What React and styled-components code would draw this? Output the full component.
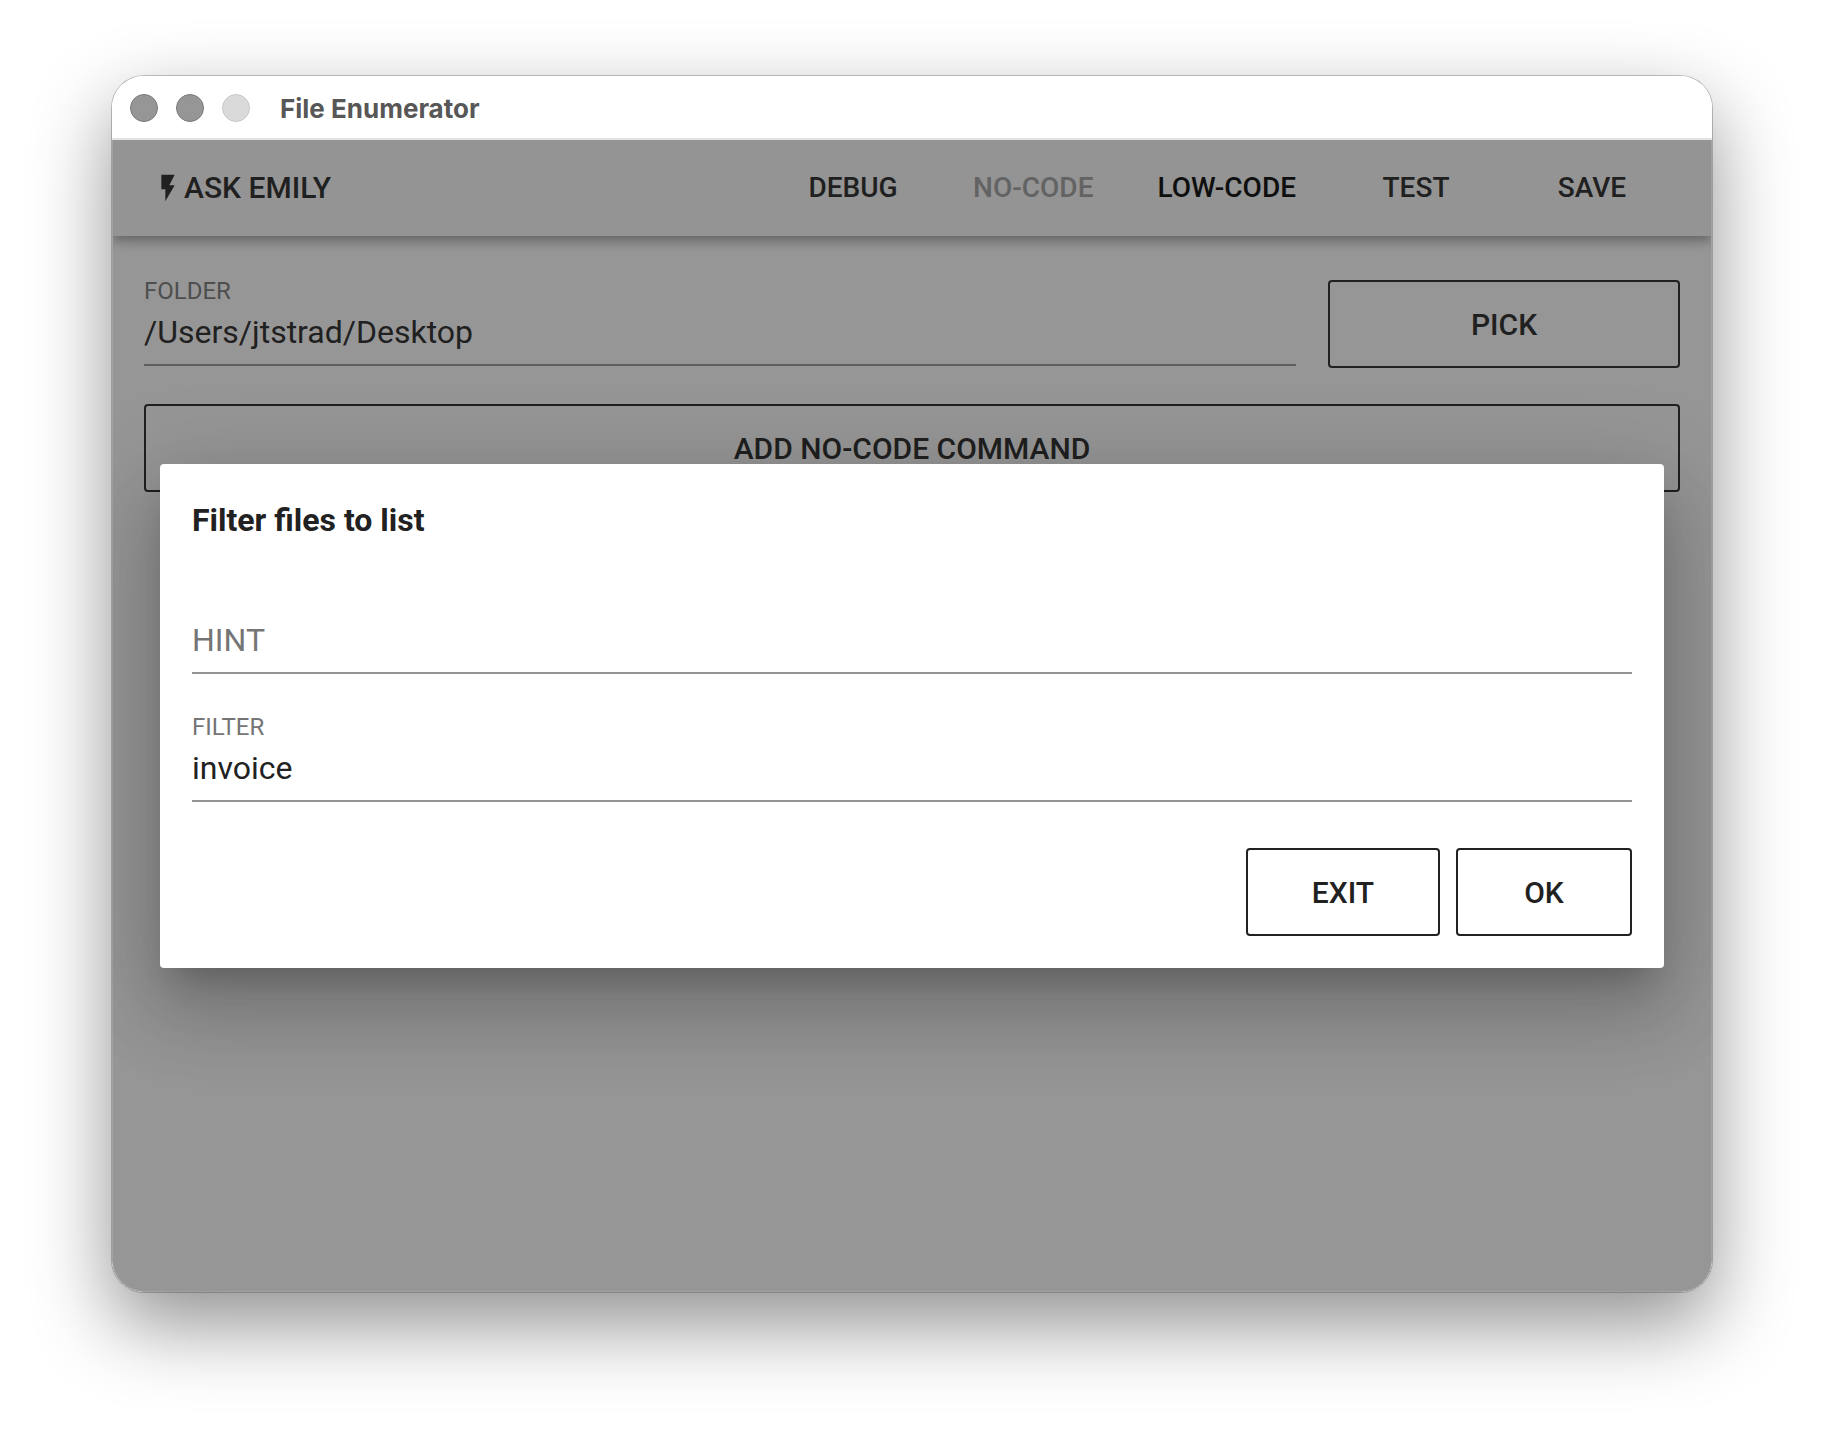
import React, { useState } from "react";
import styled, { createGlobalStyle } from "styled-components";
import { MdFlashOn } from "react-icons/md";

const GlobalStyle = createGlobalStyle`
    * {
        box-sizing: border-box;
    }
    body {
        margin: 0;
        background: #ffffff;
        color: #212121;
        font-family: Roboto, sans-serif;
    }
    button, input {
        font-family: inherit;
        color: inherit;
    }
`;

const actions = [
    { label: "Debug" },
    { label: "No-Code", disabled: true },
    { label: "Low-Code", active: true },
    { label: "Test" },
    { label: "Save" },
];

function TextField({ id, label, value, onChange }) {
    return (
        <FieldStyled>
            {/* the label only floats above the line once there is a value */}
            <FieldLabel htmlFor={id} $floating={value !== ""}>{label}</FieldLabel>
            <FieldInput id={id} type="text" value={value} onChange={(e) => onChange(e.target.value)} />
        </FieldStyled>
    );
}

function App() {
    const [folder, setFolder] = useState("/Users/jtstrad/Desktop");
    const [hint, setHint] = useState("");
    const [filter, setFilter] = useState("invoice");

    return (
        <Page>
            <GlobalStyle />
            <Window>
                <TitleBar>
                    <Lights>
                        <Light />
                        <Light />
                        <Light $dim />
                    </Lights>
                    <WindowTitle>File Enumerator</WindowTitle>
                </TitleBar>
                <Content>
                    <Toolbar>
                        <Brand href="#">
                            <MdFlashOn size={32} aria-hidden="true" />
                            Ask Emily
                        </Brand>
                        <Actions>
                            {actions.map((item) => (
                                <ActionButton key={item.label} type="button" disabled={item.disabled} $active={item.active}>
                                    {item.label}
                                </ActionButton>
                            ))}
                        </Actions>
                    </Toolbar>
                    <Main>
                        <FolderRow>
                            <TextField id="folder" label="Folder" value={folder} onChange={setFolder} />
                            <OutlinedButton type="button">Pick</OutlinedButton>
                        </FolderRow>
                        <OutlinedButton type="button">Add No-Code Command</OutlinedButton>
                    </Main>
                    <Scrim>
                        <Dialog role="dialog" aria-labelledby="dialog-title">
                            <DialogTitle id="dialog-title">Filter files to list</DialogTitle>
                            <DialogFields>
                                <TextField id="hint" label="Hint" value={hint} onChange={setHint} />
                                <TextField id="filter" label="Filter" value={filter} onChange={setFilter} />
                            </DialogFields>
                            <DialogActions>
                                <OutlinedButton type="button">Exit</OutlinedButton>
                                <OutlinedButton type="button">OK</OutlinedButton>
                            </DialogActions>
                        </Dialog>
                    </Scrim>
                </Content>
            </Window>
        </Page>
    );
}

const Page = styled.div`
    display: flex;
    flex-direction: column;
    min-height: 100vh;
    padding: 76px 112px 148px;
`;

const Window = styled.div`
    flex: 1;
    display: flex;
    flex-direction: column;
    border-radius: 32px;
    box-shadow: 0 0 0 1px rgba(0, 0, 0, 0.22), 0 32px 80px rgba(0, 0, 0, 0.44);
`;

const TitleBar = styled.header`
    display: flex;
    align-items: center;
    gap: 30px;
    height: 64px;
    padding: 2px 18px 0;
    background: #ffffff;
    border-bottom: 2px solid #e3e3e3;
    border-radius: 32px 32px 0 0;
`;

const Lights = styled.div`
    display: flex;
    gap: 18px;
`;

const Light = styled.span`
    width: 28px;
    height: 28px;
    border-radius: 50%;
    background: ${(props) => (props.$dim ? "#dadada" : "#969696")};
    border: 1px solid ${(props) => (props.$dim ? "#c9c9c9" : "#7a7a7a")};
`;

const WindowTitle = styled.h1`
    margin: 0;
    padding-top: 2px;
    font-family: Inter, sans-serif;
    font-size: 26px;
    line-height: 32px;
    font-weight: 700;
    color: #575757;
`;

const Content = styled.div`
    position: relative;
    flex: 1;
    display: flex;
    flex-direction: column;
    overflow: hidden;
    background: #fafafa;
    border-radius: 0 0 32px 32px;
`;

const Toolbar = styled.div`
    display: flex;
    align-items: center;
    justify-content: space-between;
    height: 96px;
    padding: 0 32px 0 40px;
    background: #f5f5f5;
    box-shadow: 0 4px 8px -2px rgba(0, 0, 0, 0.2), 0 8px 10px rgba(0, 0, 0, 0.14),
        0 2px 20px rgba(0, 0, 0, 0.12);
`;

const Brand = styled.a`
    display: flex;
    align-items: center;
    font-size: 30px;
    line-height: 34px;
    font-weight: 500;
    color: inherit;
    text-decoration: none;
    text-transform: uppercase;
`;

const Actions = styled.nav`
    display: flex;
    padding-bottom: 2px;
`;

const ActionButton = styled.button`
    min-width: 176px;
    height: 72px;
    padding: 0 32px;
    border: none;
    background: none;
    font-size: 28px;
    font-weight: 500;
    text-transform: uppercase;
    color: ${(props) => (props.$active ? "#000000" : "#212121")};
    &:disabled {
        color: #9b9b9b;
    }
`;

const Main = styled.main`
    display: flex;
    flex-direction: column;
    gap: 36px;
    padding: 44px 32px;
`;

const FolderRow = styled.div`
    display: grid;
    grid-template-columns: 1fr 352px;
    gap: 32px;
`;

const FieldStyled = styled.div`
    position: relative;
    display: flex;
    flex-direction: column;
    justify-content: flex-end;
    height: 86px;
`;

const FieldLabel = styled.label`
    position: absolute;
    left: 0;
    top: ${(props) => (props.$floating ? "0" : "32px")};
    font-size: ${(props) => (props.$floating ? "24px" : "32px")};
    line-height: ${(props) => (props.$floating ? "22px" : "40px")};
    color: #757575;
    text-transform: uppercase;
    pointer-events: none;
`;

const FieldInput = styled.input`
    width: 100%;
    height: 54px;
    padding: 0 0 12px;
    border: none;
    border-bottom: 2px solid #949494;
    outline: none;
    background: none;
    font-size: 32px;
    line-height: 40px;
`;

const OutlinedButton = styled.button`
    min-width: 176px;
    height: 88px;
    padding: 0 64px;
    border: 2px solid #212121;
    border-radius: 4px;
    background: none;
    font-size: 30px;
    font-weight: 500;
    text-transform: uppercase;
`;

const Scrim = styled.div`
    position: absolute;
    inset: 0;
    display: flex;
    align-items: center;
    padding: 0 48px;
    background: rgba(33, 33, 33, 0.46);
    border-radius: 0 0 32px 32px;
    box-shadow: inset 1px -1px 0 #a2a2a2, inset -1px 0 0 #a2a2a2;
`;

const Dialog = styled.section`
    flex: 1;
    padding: 32px;
    background: #ffffff;
    border-radius: 4px;
    box-shadow: 0 22px 30px -14px rgba(0, 0, 0, 0.2), 0 48px 76px 6px rgba(0, 0, 0, 0.14),
        0 18px 92px 16px rgba(0, 0, 0, 0.12);
`;

const DialogTitle = styled.h2`
    margin: 0 0 44px;
    font-size: 32px;
    line-height: 48px;
    font-weight: 700;
`;

const DialogFields = styled.div`
    display: flex;
    flex-direction: column;
    gap: 42px;
`;

const DialogActions = styled.div`
    display: flex;
    justify-content: flex-end;
    gap: 16px;
    margin-top: 46px;
`;

export default App;
